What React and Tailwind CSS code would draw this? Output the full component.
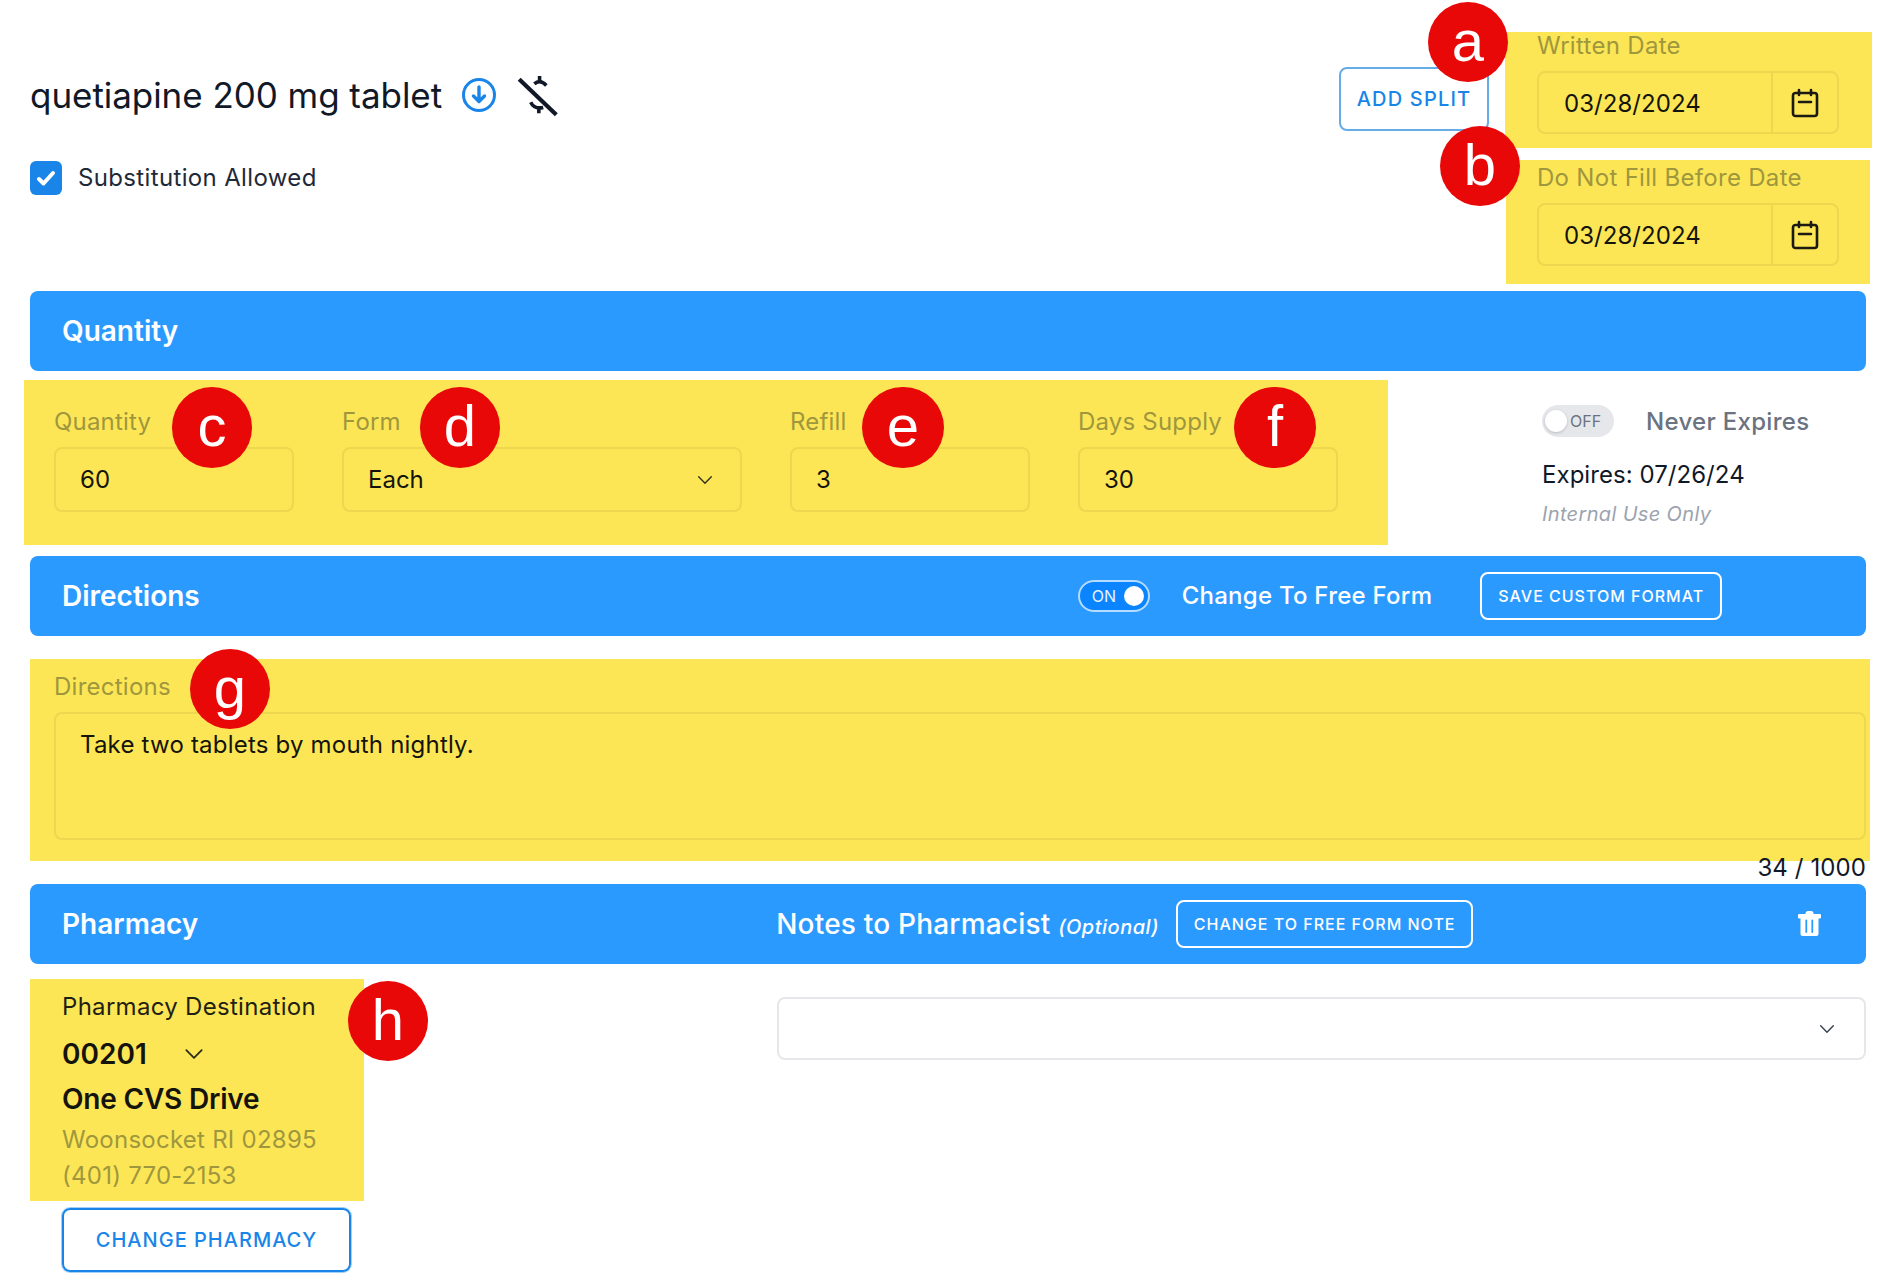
import React from "react";

const Chevron = ({ className = "w-[20px] h-[20px]" }) => (
  <svg viewBox="0 0 20 20" className={className} fill="none" stroke="currentColor" strokeWidth="1.6" strokeLinecap="round" strokeLinejoin="round">
    <path d="M3 6.5 L10 13.5 L17 6.5" />
  </svg>
);

const Cal = () => (
  <svg viewBox="0 0 28 30" className="w-[28px] h-[30px] text-[#1a1a12]" fill="none" stroke="currentColor" strokeWidth="2.6" strokeLinecap="round" strokeLinejoin="round">
    <rect x="2" y="5" width="24" height="23" rx="2.5" />
    <path d="M8 2v5M20 2v5M8 14h12" />
  </svg>
);

const DollarOff = () => (
  <svg viewBox="76 16 44 44" className="w-[46px] h-[46px] ml-[18px] mt-[6px] text-[#111827]" fill="none" stroke="currentColor">
    <path d="M80 20 L115.5 54" strokeWidth="4" />
    <path d="M99.5 17 V22.5 M94.5 24.5 Q100 19.5 106 26" strokeWidth="3.4" />
    <path d="M91 42 Q94.5 49 103 47 M98.8 47 V52.5" strokeWidth="3.4" />
  </svg>
);

const Trash = () => (
  <svg viewBox="38 19 26 28" className="ml-[324px] w-[26px] h-[28px] text-white" fill="currentColor">
    <rect x="46.5" y="20" width="8" height="6" rx="2.5" />
    <rect x="39" y="23" width="23" height="4.5" rx="1" />
    <path fillRule="evenodd" d="M41.5 27h18v16a2 2 0 0 1-2 2h-14a2 2 0 0 1-2-2z M46.4 29.5v11.5a0.9 0.9 0 0 0 1.8 0v-11.5a0.9 0.9 0 0 0-1.8 0z M52.4 29.5v11.5a0.9 0.9 0 0 0 1.8 0v-11.5a0.9 0.9 0 0 0-1.8 0z" />
  </svg>
);

const Badge = ({ letter, className }) => (
  <div className={`absolute h-[80px] rounded-full bg-[#e80808] text-white flex items-center justify-center text-[58px] leading-none font-['Liberation_Sans',sans-serif] ${className}`}>
    <span className="-mt-[3px]">{letter}</span>
  </div>
);

const DateField = ({ label, className, labelClass, boxClass }) => (
  <div className={`bg-[#fde655] pl-[32px] ${className}`}>
    <div className={`text-[24px] leading-[28px] tracking-[0.3px] text-[#9f973d] ${labelClass}`}>{label}</div>
    <div className={`w-[302px] h-[63px] border-2 border-[#ecd74f] rounded-[8px] flex ${boxClass}`}>
      <div className="w-[234px] h-full border-r-2 border-[#ecd74f] flex items-center pl-[25px] pt-[2px] text-[24px] text-[#14140c] tracking-[0.05px]">03/28/2024</div>
      <div className="flex-1 flex items-center justify-center"><Cal /></div>
    </div>
  </div>
);

const QField = ({ label, value, width, chevron }) => (
  <div className={width}>
    <div className="text-[24px] leading-[28px] tracking-[0.2px] text-[#9f973d] pt-[1px] h-[29px]">{label}</div>
    <div className="mt-[11px] h-[65px] border-2 border-[#ecd74f] rounded-[8px] flex items-center justify-between pl-[24px] pr-[26px] text-[24px] text-[#14140c]">
      <span>{value}</span>
      {chevron && <Chevron className="w-[18px] h-[18px] text-[#33331f]" />}
    </div>
  </div>
);

const Bar = ({ children, className = "" }) => (
  <div className={`h-[80px] bg-[#2b9aff] rounded-[8px] flex items-center text-white ${className}`}>{children}</div>
);

const BarTitle = ({ children }) => <div className="text-[28px] font-semibold pl-[32px]">{children}</div>;

const OutlineBtn = ({ children, className }) => (
  <div className={`h-[48px] border-2 border-white rounded-[8px] flex items-center justify-center text-[16px] font-medium tracking-[1px] text-white ${className}`}>{children}</div>
);

export default function App() {
  return (
    <div className="relative w-[1898px] h-[1284px] overflow-hidden bg-white font-['Inter',sans-serif] text-[#111827] pl-[30px] pr-[32px] pt-[32px]">
      {/* top */}
      <div className="flex h-[259px]">
        <div className="flex-1">
          <div className="flex items-center mt-[39px] h-[48px]">
            <span className="text-[35px] leading-[48px] tracking-[-0.05px]">quetiapine 200 mg tablet</span>
            <svg viewBox="0 0 36 36" className="w-[36px] h-[36px] ml-[19px] text-[#1a85e8]" fill="none" stroke="currentColor" strokeWidth="3" strokeLinecap="round" strokeLinejoin="round">
              <circle cx="18" cy="18" r="15.5" />
              <path d="M18 10v14.5M12.5 19l5.5 5.5 5.5-5.5" strokeWidth="3.4" />
            </svg>
            <DollarOff />
          </div>
          <div className="flex items-center mt-[41px]">
            <div className="w-[32px] h-[34px] rounded-[6px] bg-[#1a85e8] flex items-center justify-center">
              <svg viewBox="0 0 24 24" className="w-[24px] h-[24px]" fill="none" stroke="white" strokeWidth="4" strokeLinecap="round" strokeLinejoin="round"><path d="M5 13l4.5 4.5L19 7" /></svg>
            </div>
            <span className="ml-[16px] text-[24px] tracking-[0.35px] text-[#1f2937]">Substitution Allowed</span>
          </div>
        </div>
        <div className="mt-[35px] mr-[16px] w-[150px] h-[64px] rounded-[8px] border-2 border-[#66ace6] flex items-center justify-center text-[20px] font-medium tracking-[1.2px] text-[#1a85e8]">ADD SPLIT</div>
        <div className="w-[367px] -mr-[6px]">
          <DateField label="Written Date" className="h-[116px]" boxClass="mt-[11px]" />
          <DateField label="Do Not Fill Before Date" className="h-[124px] mt-[12px] ml-[1px] w-[364px] pl-[31px]" labelClass="pt-[4px] -ml-[1px]" boxClass="mt-[11px] -ml-[1px]" />
        </div>
      </div>

      {/* quantity */}
      <Bar><BarTitle>Quantity</BarTitle></Bar>
      <div className="flex mt-[9px] h-[165px]">
        <div className="w-[1364px] -ml-[6px] bg-[#fde655] flex gap-[48px] pl-[30px] pt-[27px]">
          <QField label="Quantity" value="60" width="w-[240px]" />
          <QField label="Form" value="Each" width="w-[400px]" chevron />
          <QField label="Refill" value="3" width="w-[240px]" />
          <QField label="Days Supply" value="30" width="w-[260px]" />
        </div>
        <div className="ml-[154px] pt-[25px]">
          <div className="flex items-center h-[32px]">
            <div className="w-[72px] h-[32px] rounded-full bg-[#e5e7eb] flex items-center pl-[3px]">
              <div className="w-[22px] h-[22px] rounded-full bg-white shadow-[0_1px_3px_rgba(0,0,0,0.2)]" />
              <span className="ml-[3px] text-[16px] text-[#6b7280]">OFF</span>
            </div>
            <span className="ml-[32px] mt-[1px] text-[24px] tracking-[0.3px] font-medium text-[#6b7280]">Never Expires</span>
          </div>
          <div className="mt-[22px] text-[24px] leading-[32px] tracking-[0.05px] text-[#111827]">Expires: 07/26/24</div>
          <div className="mt-[9px] text-[20px] leading-[28px] italic tracking-[0.35px] text-[#9ca3af]">Internal Use Only</div>
        </div>
      </div>

      {/* directions */}
      <Bar className="mt-[11px]">
        <BarTitle>Directions</BarTitle>
        <div className="ml-[878px] w-[72px] h-[32px] rounded-full bg-[#0a85ff] border-2 border-[#b3dcff] flex items-center pl-[12px]">
          <span className="text-[16px] text-white/90">ON</span>
          <div className="ml-[8px] w-[20px] h-[20px] rounded-full bg-white" />
        </div>
        <div className="ml-[32px] text-[24px] font-medium tracking-[0.25px]">Change To Free Form</div>
        <OutlineBtn className="ml-[48px] w-[242px]">SAVE CUSTOM FORMAT</OutlineBtn>
      </Bar>

      <div className="mt-[23px] h-[202px] bg-[#fde655] -mr-[4px] pl-[24px] pr-[4px] pt-[14px]">
        <div className="text-[24px] leading-[28px] tracking-[0.25px] h-[28px] text-[#9f973d]">Directions</div>
        <div className="mt-[11px] h-[128px] border-2 border-[#ecd74f] rounded-[8px] pl-[24px] pt-[15px] text-[24px] leading-[32px] tracking-[0.2px] text-[#14140c]">Take two tablets by mouth nightly.</div>
      </div>
      <div className="text-right text-[24px] leading-[24px] -mt-[5px] h-[28px] tracking-[0.1px] text-[#111827]">34 / 1000</div>

      {/* pharmacy */}
      <Bar>
        <BarTitle>Pharmacy</BarTitle>
        <div className="ml-[578px] text-[28px] font-medium tracking-[0.2px] whitespace-nowrap">Notes to Pharmacist <span className="text-[20px] italic font-medium tracking-[0.5px]">(Optional)</span></div>
        <OutlineBtn className="ml-[17px] w-[297px]">CHANGE TO FREE FORM NOTE</OutlineBtn>
        <Trash />
      </Bar>

      <div className="flex">
        <div className="w-[364px]">
          <div className="mt-[15px] h-[222px] w-[334px] bg-[#fde655] pl-[32px] pt-[13px]">
            <div className="text-[24px] leading-[30px] tracking-[0.3px] text-[#1f1f14]">Pharmacy Destination</div>
            <div className="flex items-center mt-[12px] h-[40px]">
              <span className="text-[28px] font-semibold tracking-[0.05px] text-[#14140c]">00201</span>
              <Chevron className="ml-[36px] w-[22px] h-[22px] text-[#2a2a18]" />
            </div>
            <div className="mt-[5px] text-[28px] leading-[40px] font-semibold tracking-[-0.2px] text-[#14140c]">One CVS Drive</div>
            <div className="mt-[3px] text-[24px] leading-[36px] tracking-[0.25px] text-[#9f973d]">Woonsocket RI 02895</div>
            <div className="text-[24px] leading-[36px] tracking-[0.25px] text-[#9f973d]">(401) 770-2153</div>
          </div>
          <div className="ml-[32px] mt-[7px] w-[289px] h-[64px] rounded-[8px] border-2 border-[#1a85e8] flex items-center justify-center text-[20px] font-medium tracking-[1px] text-[#1a85e8] shadow-[0_0_0_1px_#a5d0f5]">CHANGE PHARMACY</div>
        </div>
        <div className="flex-1 ml-[383px] mt-[33px] h-[63px] border-2 border-[#e5e7eb] rounded-[8px] flex items-center justify-end pr-[28px] text-[#374151]">
          <Chevron className="w-[18px] h-[18px]" />
        </div>
      </div>

      <Badge letter="a" className="w-[80px] left-[1428px] top-[2px]" />
      <Badge letter="b" className="w-[80px] left-[1440px] top-[126px]" />
      <Badge letter="c" className="w-[80px] h-[81px] left-[172px] top-[387px]" />
      <Badge letter="d" className="w-[80px] h-[81px] left-[420px] top-[387px]" />
      <Badge letter="e" className="w-[82px] h-[81px] left-[862px] top-[387px]" />
      <Badge letter="f" className="w-[82px] h-[81px] left-[1234px] top-[387px]" />
      <Badge letter="g" className="w-[80px] left-[190px] top-[649px]" />
      <Badge letter="h" className="w-[80px] left-[348px] top-[981px]" />
    </div>
  );
}
